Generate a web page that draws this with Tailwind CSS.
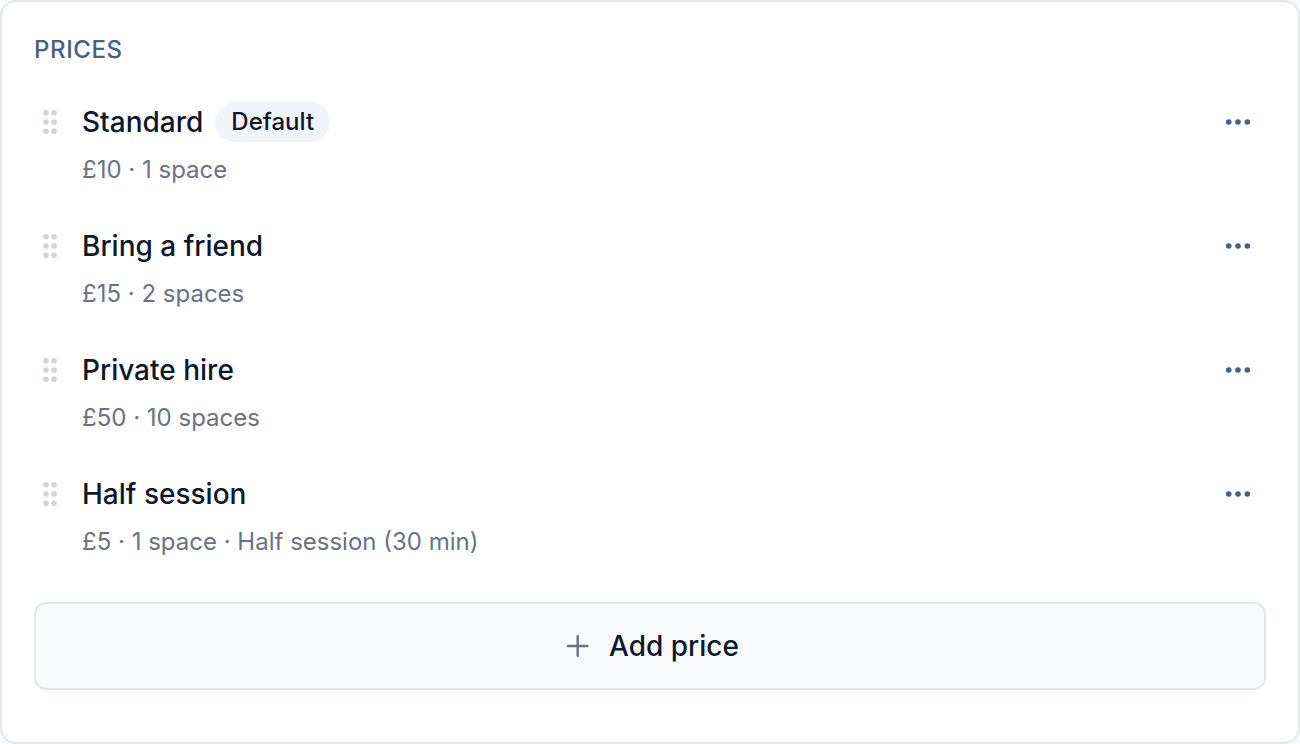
<!DOCTYPE html>
<html lang="en">

<head>
	<meta charset="UTF-8" />
	<meta name="viewport" content="width=device-width, initial-scale=1.0" />
	<script src="https://cdn.jsdelivr.net/npm/@tailwindcss/browser@4"></script>
	<title>Prices</title>
</head>

<body class="bg-[#f9fafc] font-['Inter',sans-serif] text-[#0f172a]">
	<svg class="hidden">
		<symbol id="grip" viewBox="0 0 32 32">
			<circle cx="12" cy="6.7" r="2.8" />
			<circle cx="20" cy="6.7" r="2.8" />
			<circle cx="12" cy="16" r="2.8" />
			<circle cx="20" cy="16" r="2.8" />
			<circle cx="12" cy="25.3" r="2.8" />
			<circle cx="20" cy="25.3" r="2.8" />
		</symbol>
		<symbol id="dots" viewBox="0 0 32 32">
			<circle cx="6.7" cy="16" r="2.8" />
			<circle cx="16" cy="16" r="2.8" />
			<circle cx="25.3" cy="16" r="2.8" />
		</symbol>
	</svg>

	<main class="min-h-screen rounded-2xl border-2 border-[#e5e7eb] bg-white p-8">
		<h2 class="mb-4 text-2xl font-medium tracking-wide text-[#475f85]">PRICES</h2>

		<ul>
			<li class="flex items-start gap-4 py-5">
				<button type="button" aria-label="Reorder Standard" class="flex h-10 w-8 items-center text-[#d1d5db]">
					<svg class="size-8" fill="currentColor"><use href="#grip" /></svg>
				</button>
				<div class="flex-1">
					<div class="flex h-10 items-center gap-3">
						<h3 class="text-[28px] font-medium">Standard</h3>
						<span class="flex h-10 items-center rounded-full bg-[#f1f5f9] px-4 text-2xl font-medium">Default</span>
					</div>
					<p class="mt-3 text-2xl text-[#6b7280]">£10 · 1 space</p>
				</div>
				<button type="button" aria-label="Options for Standard" class="flex h-10 w-14 items-center justify-center text-[#475f85]">
					<svg class="size-8" fill="currentColor"><use href="#dots" /></svg>
				</button>
			</li>
			<li class="flex items-start gap-4 py-5">
				<button type="button" aria-label="Reorder Bring a friend" class="flex h-10 w-8 items-center text-[#d1d5db]">
					<svg class="size-8" fill="currentColor"><use href="#grip" /></svg>
				</button>
				<div class="flex-1">
					<div class="flex h-10 items-center">
						<h3 class="text-[28px] font-medium">Bring a friend</h3>
					</div>
					<p class="mt-3 text-2xl text-[#6b7280]">£15 · 2 spaces</p>
				</div>
				<button type="button" aria-label="Options for Bring a friend" class="flex h-10 w-14 items-center justify-center text-[#475f85]">
					<svg class="size-8" fill="currentColor"><use href="#dots" /></svg>
				</button>
			</li>
			<li class="flex items-start gap-4 py-5">
				<button type="button" aria-label="Reorder Private hire" class="flex h-10 w-8 items-center text-[#d1d5db]">
					<svg class="size-8" fill="currentColor"><use href="#grip" /></svg>
				</button>
				<div class="flex-1">
					<div class="flex h-10 items-center">
						<h3 class="text-[28px] font-medium">Private hire</h3>
					</div>
					<p class="mt-3 text-2xl text-[#6b7280]">£50 · 10 spaces</p>
				</div>
				<button type="button" aria-label="Options for Private hire" class="flex h-10 w-14 items-center justify-center text-[#475f85]">
					<svg class="size-8" fill="currentColor"><use href="#dots" /></svg>
				</button>
			</li>
			<li class="flex items-start gap-4 py-5">
				<button type="button" aria-label="Reorder Half session" class="flex h-10 w-8 items-center text-[#d1d5db]">
					<svg class="size-8" fill="currentColor"><use href="#grip" /></svg>
				</button>
				<div class="flex-1">
					<div class="flex h-10 items-center">
						<h3 class="text-[28px] font-medium">Half session</h3>
					</div>
					<p class="mt-3 text-2xl text-[#6b7280]">£5 · 1 space · Half session (30 min)</p>
				</div>
				<button type="button" aria-label="Options for Half session" class="flex h-10 w-14 items-center justify-center text-[#475f85]">
					<svg class="size-8" fill="currentColor"><use href="#dots" /></svg>
				</button>
			</li>
		</ul>

		<button type="button"
			class="mt-6 flex w-full items-center justify-center gap-4 rounded-xl border-2 border-[#e0e7ef] bg-[#f9fafc] py-5 text-[28px]/[44px] font-medium">
			<svg class="size-8 text-[#6b7280]" viewBox="0 0 32 32" fill="none" stroke="currentColor" stroke-width="2.4"
				stroke-linecap="round">
				<path d="M7 16h19.4" />
				<path d="M16.7 6.3v19.4" />
			</svg>
			Add price
		</button>
	</main>
</body>

</html>
